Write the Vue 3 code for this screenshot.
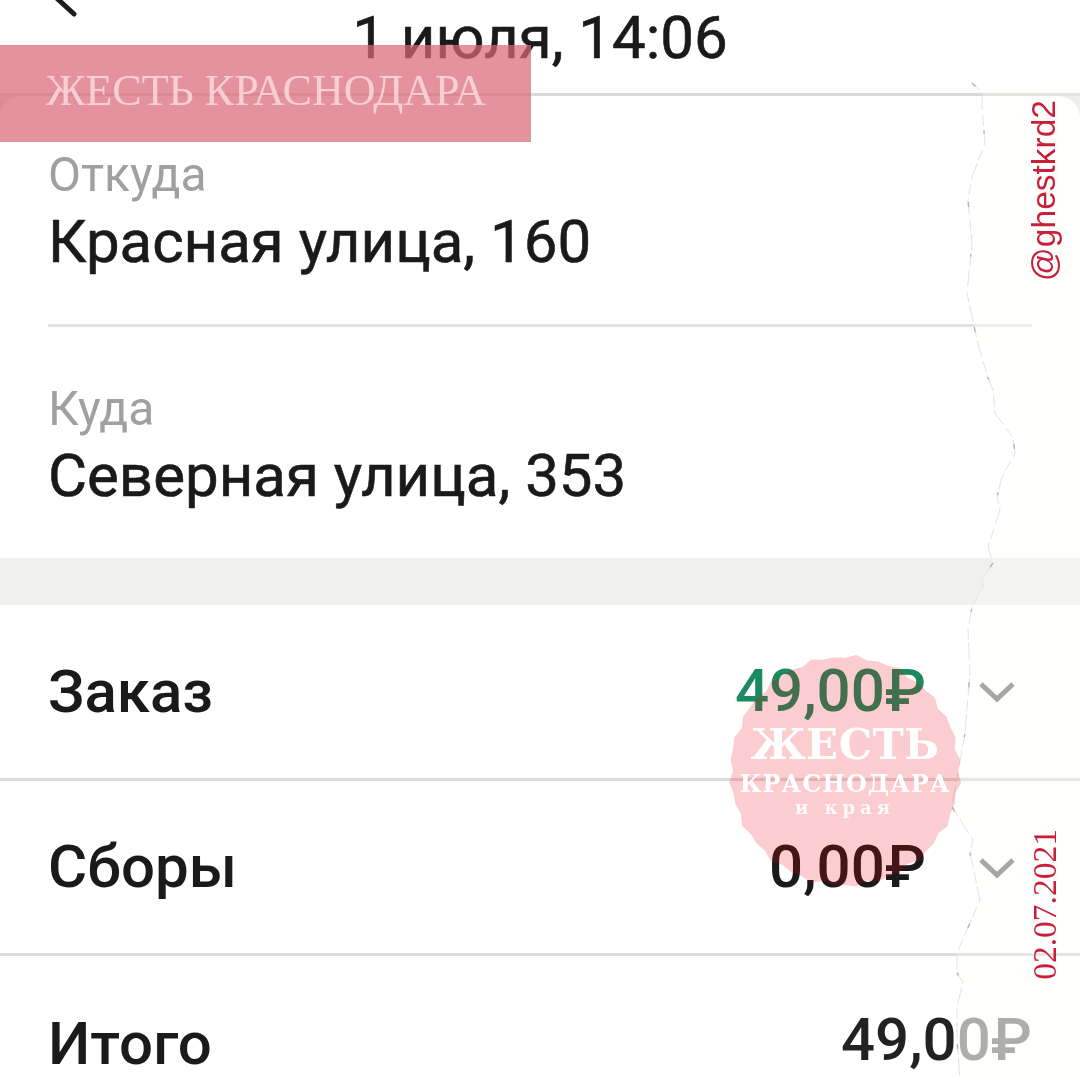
<template>
  <div class="screen">
    <header class="top">
      <svg class="back" width="40" height="24" viewBox="0 0 40 24"><path d="M0 -8 L24 14" fill="none" stroke="#1c1c1c" stroke-width="5" stroke-linecap="round" /></svg>
      <h1 class="date">1 июля, 14:06</h1>
    </header>

    <div class="sheet">
      <section class="route">
        <div class="place">
          <div class="label">Откуда</div>
          <div class="addr">Красная улица, 160</div>
        </div>
        <div class="place place-to">
          <div class="label">Куда</div>
          <div class="addr">Северная улица, 353</div>
        </div>
      </section>
    </div>

    <div class="band"></div>

    <section class="rows">
      <div v-for="row in rows" :key="row.name" class="row" :class="row.cls">
        <span class="name">{{ row.name }}</span>
        <span class="sum">{{ row.sum }}</span>
        <svg v-if="row.more" class="chev" width="38" height="24" viewBox="0 0 38 24"><path d="M3 5 L19 20 L35 5" fill="none" stroke="#808080" stroke-width="5" /></svg>
      </div>
    </section>

    <!-- наложения поверх скриншота -->
    <svg class="tear" width="1080" height="1080" viewBox="0 0 1080 1080">
      <path :d="tearPath + ' L1080 1080 L1080 80 Z'" fill="rgba(255, 255, 252, 0.3)" />
      <path :d="tearPath" fill="none" stroke="#e2e2e2" stroke-width="1" stroke-dasharray="11 3 17 5" />
      <path :d="tearPath" fill="none" stroke="#b4b4b4" stroke-width="1.4" stroke-dasharray="5 47 3 71" />
    </svg>

    <div class="banner">ЖЕСТЬ КРАСНОДАРА</div>

    <div class="stamp">
      <svg class="stamp-blob blob-mul" width="232" height="232" viewBox="0 0 232 232"><polygon :points="blobPoints" fill="#fbcdd0" /></svg>
      <svg class="stamp-blob blob-scr" width="232" height="232" viewBox="0 0 232 232"><polygon :points="blobPoints" fill="#2c0000" /></svg>
      <div class="stamp-text">
        <div class="s1">ЖЕСТЬ</div>
        <div class="s2">КРАСНОДАРА</div>
        <div class="s3">и края</div>
      </div>
    </div>

    <div class="side side-nick">@ghestkrd2</div>
    <div class="side side-date">02.07.2021</div>
  </div>
</template>

<script setup>
const rows = [
  { name: "Заказ", sum: "49,00₽", more: true, cls: "row-green" },
  { name: "Сборы", sum: "0,00₽", more: true, cls: "" },
  { name: "Итого", sum: "49,00₽", more: false, cls: "row-total" },
];

// линия разрыва бумаги
const tearPath =
  "M972 83 L982 93 L982 108 L985 143 L972 177 L968 200 L972 243 L967 293 L977 340 L988 378 L993 390 L995 413 L1013 438 L1015 453 L1002 477 L997 497 L1000 510 L988 547 L993 563 L982 580 L983 587 L972 607 L968 630 L970 673 L965 733 L952 807 L973 840 L970 853 L980 900 L970 923 L957 953 L957 973 L963 982 L957 1007 L957 1040 L960 1080";

// неровный край круглой печати
const blobPoints = Array.from({ length: 64 }, (_, i) => {
  const a = (i / 64) * Math.PI * 2;
  const r = 113 + (i % 2 ? 2.5 : 0) + Math.sin(i * 1.7) * 1.2;
  return `${(116 + r * Math.cos(a)).toFixed(1)},${(116 + r * Math.sin(a)).toFixed(1)}`;
}).join(" ");
</script>

<style>
html,
body {
  margin: 0;
  background: #fff;
}
</style>

<style scoped>
.screen {
  position: relative;
  width: 1080px;
  height: 1080px;
  overflow: hidden;
  background: #fff;
  color: #1a1a1a;
  font-family: Roboto, "Noto Sans", sans-serif;
}

.top,
.sheet,
.rows {
  filter: blur(0.6px);
}

.top {
  position: relative;
  height: 93px;
  border-bottom: 3px solid #d9d9d7;
  display: flex;
  justify-content: center;
}
.back {
  position: absolute;
  left: 50px;
  top: 0;
}
.date {
  margin: 4px 0 0;
  font-size: 60px;
  line-height: 68px;
  font-weight: 400;
  -webkit-text-stroke: 0.6px #1a1a1a;
}

.sheet {
  background: #e6e6e3;
}
.route {
  height: 462px;
  padding: 0 48px;
  display: flex;
  flex-direction: column;
  background: #fff;
  border-radius: 22px 22px 0 0;
}
.place {
  height: 231px;
  padding-top: 54px;
  box-sizing: border-box;
  border-bottom: 3px solid #e2e2e0;
}
.place-to {
  border-bottom: 0;
  padding-top: 57px;
}
.label {
  font-size: 48px;
  line-height: 50px;
  color: #a0a0a0;
}
.addr {
  font-size: 60px;
  line-height: 68px;
  margin-top: 8px;
  -webkit-text-stroke: 0.6px #1a1a1a;
}

.band {
  height: 47px;
  background: #f0f0ec;
}

.row {
  height: 175.5px;
  padding: 0 48px;
  box-sizing: border-box;
  display: flex;
  align-items: center;
  border-bottom: 3px solid #dcdcda;
  position: relative;
}
.row-total {
  border-bottom: 0;
}
.name {
  font-size: 60px;
  font-weight: 500;
  flex: 1;
}
.sum {
  font-size: 60px;
  line-height: 60px;
  font-weight: 500;
  margin-right: 106px;
}
.row-total .sum {
  margin-right: 0;
  padding-bottom: 8px;
  background: linear-gradient(90deg, #222 60%, #8a8a8a 61%);
  -webkit-background-clip: text;
  background-clip: text;
  color: transparent;
}
.row-green .sum {
  color: #1b8a60;
}
.chev {
  position: absolute;
  left: 978px;
  top: 74px;
}

.tear {
  position: absolute;
  left: 0;
  top: 0;
  pointer-events: none;
}

.banner {
  position: absolute;
  left: 0;
  top: 45px;
  width: 531px;
  height: 97px;
  box-sizing: border-box;
  padding: 0 0 6px 46px;
  display: flex;
  align-items: center;
  background: rgba(217, 105, 120, 0.72);
  color: rgba(251, 223, 226, 0.8);
  font-family: "Liberation Serif", serif;
  font-size: 44px;
  white-space: nowrap;
}

.stamp {
  position: absolute;
  left: 729px;
  top: 655px;
  width: 232px;
  height: 232px;
}
.stamp-blob {
  position: absolute;
  left: 0;
  top: 0;
}
.blob-mul {
  mix-blend-mode: multiply;
}
.blob-scr {
  mix-blend-mode: screen;
}
.stamp-text {
  position: absolute;
  inset: 0;
  text-align: center;
  color: #fff;
  font-family: "DejaVu Serif", serif;
  font-weight: 700;
}
.s1 {
  margin-top: 72px;
  font-size: 42px;
  line-height: 36px;
  letter-spacing: 0.5px;
}
.s2 {
  margin-top: 7px;
  font-size: 24px;
  line-height: 28px;
  letter-spacing: 1px;
  white-space: nowrap;
}
.s3 {
  font-size: 18px;
  line-height: 20px;
  letter-spacing: 5px;
  opacity: 0.9;
}

.side {
  position: absolute;
  writing-mode: vertical-rl;
  transform: rotate(180deg);
  color: #c8203a;
  white-space: nowrap;
}
.side-nick {
  left: 1024px;
  top: 100px;
  font-family: "Liberation Sans", sans-serif;
  font-size: 33.5px;
  line-height: 40px;
}
.side-date {
  left: 1026px;
  top: 829px;
  font-family: "Liberation Serif", serif;
  font-size: 33.5px;
  line-height: 38px;
}
</style>
